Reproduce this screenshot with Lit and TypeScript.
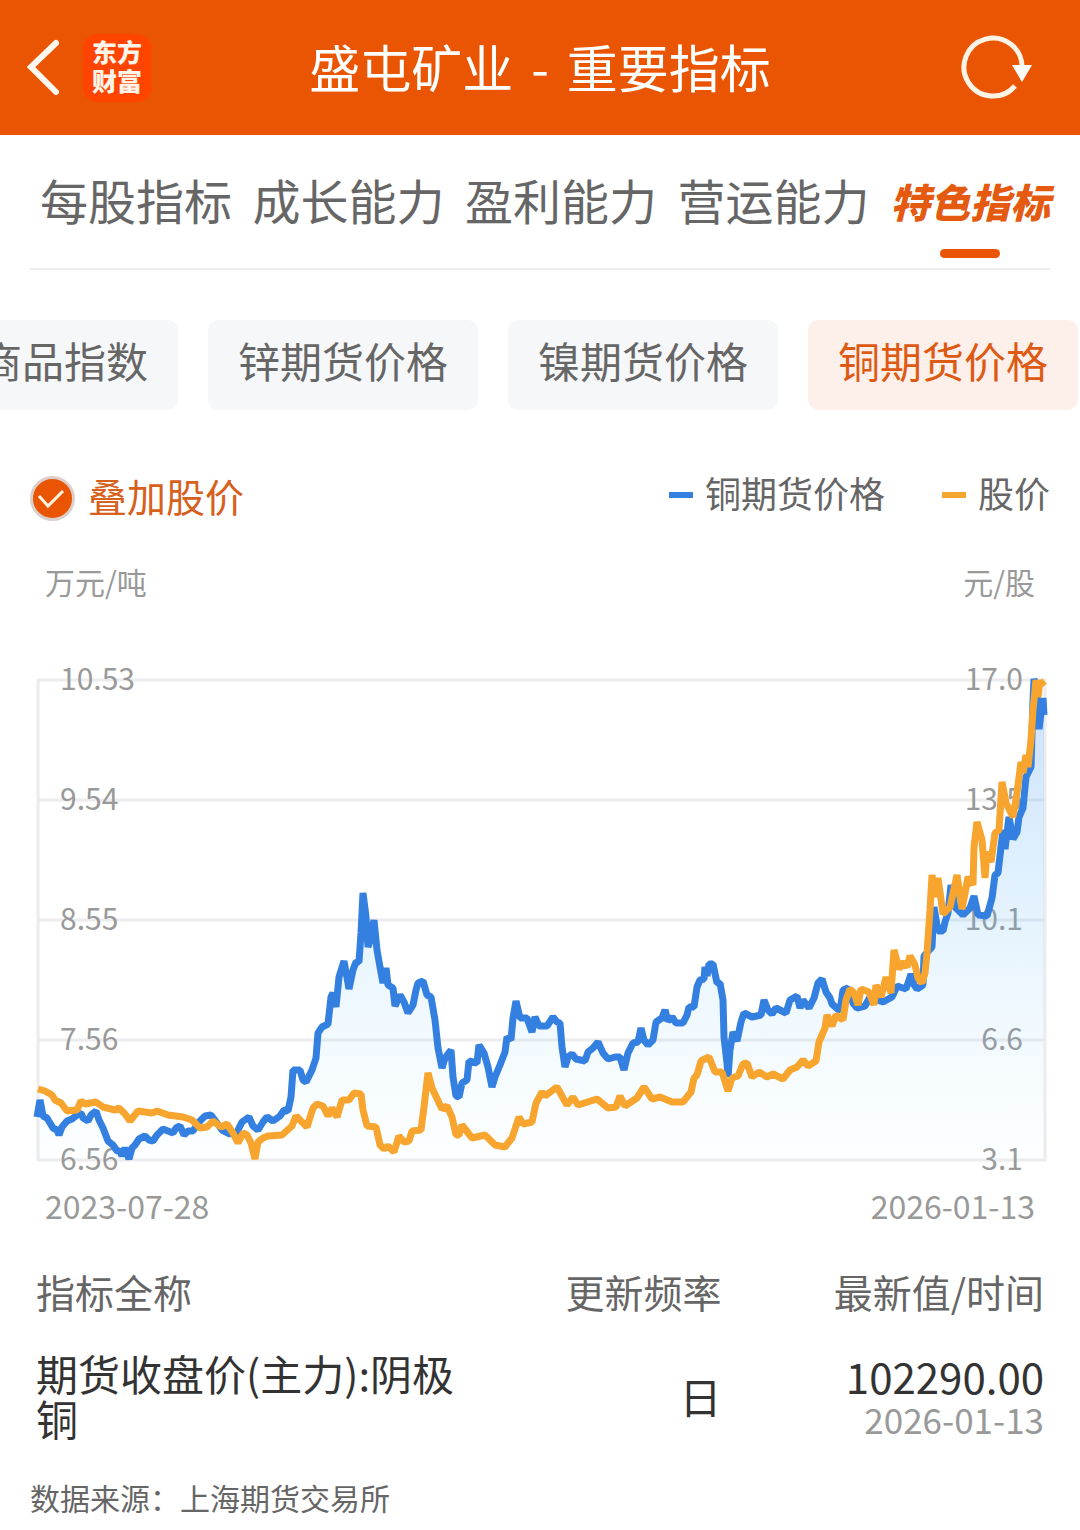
import { LitElement, html, svg, css } from "lit";
import { customElement, state } from "lit/decorators.js";
import { classMap } from "lit/directives/class-map.js";

const BLUE_POINTS =
  "37,1117 40,1100 43,1116 47,1118 50,1123 53,1128 57,1130 59,1135 62,1127 67,1121 72,1119 77,1115 81,1113 83,1118 88,1121 91,1115 96,1111 99,1120 103,1128 108,1141 113,1145 117,1151 120,1151 122,1156 125,1148 129,1159 132,1148 135,1145 139,1139 145,1136 149,1140 153,1141 157,1135 163,1129 168,1131 173,1133 176,1128 180,1126 184,1135 188,1131 193,1131 198,1123 205,1116 211,1115 217,1123 222,1130 230,1134 237,1132 242,1122 249,1117 253,1126 258,1130 263,1122 267,1117 273,1121 280,1116 284,1110 288,1111 291,1097 293,1070 300,1070 303,1080 306,1082 312,1070 316,1058 318,1033 322,1027 328,1024 331,997 333,993 336,1007 339,977 344,961 349,989 353,970 356,962 359,962 361,933 363,893 366,917 368,947 371,937 374,920 377,950 380,967 383,983 386,968 388,985 393,988 395,1006 400,995 404,1002 408,1013 413,1005 416,990 418,983 423,981 427,995 431,997 435,1020 438,1048 442,1068 445,1058 451,1050 453,1077 456,1096 459,1097 462,1083 467,1080 469,1061 477,1063 479,1045 484,1053 488,1067 492,1087 495,1077 500,1065 505,1052 507,1037 511,1040 513,1018 516,1001 520,1018 527,1018 532,1032 535,1017 539,1026 547,1026 553,1017 557,1022 560,1023 562,1047 565,1067 568,1057 572,1054 576,1059 585,1061 588,1052 593,1048 598,1042 603,1053 608,1059 615,1057 620,1057 624,1070 628,1053 633,1043 638,1042 641,1028 644,1040 648,1045 653,1040 656,1022 662,1018 665,1010 668,1021 672,1017 676,1023 683,1023 687,1015 689,1007 694,1007 697,987 700,980 704,979 705,967 707,976 709,964 713,964 717,983 720,983 723,1000 724,1037 727,1063 728,1077 730,1050 733,1032 737,1041 741,1022 744,1013 752,1017 761,1015 764,1000 768,1010 772,1014 776,1008 786,1013 790,1000 797,996 800,1008 803,1000 809,1008 814,998 818,983 822,979 826,992 830,998 832,1004 840,1011 843,990 848,988 853,1003 857,1008 865,1006 870,997 883,1002 892,997 897,986 906,989 911,974 914,985 917,989 923,985 924,956 932,947 934,907 938,931 943,931 945,922 948,913 951,885 955,907 963,915 970,908 974,896 978,915 987,916 992,898 995,875 998,873 1001,847 1003,830 1005,849 1009,817 1013,839 1017,832 1019,817 1023,808 1026,777 1031,767 1033,700 1034,679 1037,690 1039,729 1043,698 1044,715";

const ORANGE_POINTS =
  "38,1089 45,1091 52,1095 55,1100 61,1103 67,1111 77,1110 81,1101 85,1104 96,1102 103,1107 115,1110 119,1108 125,1114 130,1121 138,1111 152,1113 157,1111 168,1115 183,1117 192,1120 200,1128 207,1127 213,1121 221,1127 227,1124 233,1133 238,1143 243,1133 247,1135 251,1143 255,1159 258,1142 263,1138 268,1136 282,1135 292,1126 296,1116 307,1127 313,1108 317,1104 323,1106 328,1116 332,1108 337,1117 342,1100 349,1100 354,1093 361,1094 363,1110 367,1126 376,1127 380,1145 384,1149 388,1146 394,1152 399,1136 404,1142 409,1141 412,1131 421,1130 424,1107 428,1073 432,1088 442,1109 447,1106 452,1117 456,1135 459,1135 462,1125 472,1138 485,1135 495,1145 505,1147 512,1138 519,1117 523,1124 532,1122 536,1103 542,1092 545,1096 557,1087 563,1098 567,1105 573,1097 578,1105 597,1099 608,1108 616,1107 620,1096 625,1106 637,1098 644,1087 652,1099 660,1097 672,1102 683,1102 691,1092 694,1078 697,1075 701,1061 709,1057 715,1072 722,1072 728,1091 732,1078 738,1076 743,1064 747,1063 752,1077 759,1072 767,1077 773,1074 783,1079 790,1070 797,1067 803,1060 808,1066 816,1061 819,1042 825,1028 827,1015 832,1026 836,1015 843,1020 846,1000 850,989 854,993 858,1005 861,989 869,992 874,1005 876,985 881,997 886,977 891,993 894,950 899,969 903,962 907,967 910,956 915,965 918,978 922,983 925,973 927,953 930,910 932,875 935,897 938,878 943,914 950,907 957,875 962,909 968,877 973,885 974,847 977,822 982,840 985,878 987,852 991,862 995,833 999,830 1002,782 1006,803 1013,817 1017,793 1021,762 1023,773 1026,755 1028,767 1031,740 1033,710 1036,680 1038,697 1040,681 1044,686";

const GRID_ROWS = [
  { y: 680, left: "10.53", right: "17.0" },
  { y: 800, left: "9.54", right: "13.5" },
  { y: 920, left: "8.55", right: "10.1" },
  { y: 1040, left: "7.56", right: "6.6" },
  { y: 1160, left: "6.56", right: "3.1" },
];

const TABS = ["每股指标", "成长能力", "盈利能力", "营运能力", "特色指标"];
const CHIPS = ["商品指数", "锌期货价格", "镍期货价格", "铜期货价格"];

@customElement("price-chart")
class PriceChart extends LitElement {
  static properties = { overlay: { type: Boolean } };
  declare overlay: boolean;

  static styles = css`
    :host {
      display: block;
    }
    .plot {
      display: block;
      width: 100%;
      height: auto;
    }
    .grid {
      stroke: #ececee;
      stroke-width: 3;
      fill: none;
    }
    .axis {
      fill: #999999;
      font-family: "Noto Sans CJK SC", sans-serif;
      font-size: 30px;
    }
    .end {
      text-anchor: end;
    }
    .line {
      fill: none;
      stroke-width: 7;
      stroke-linejoin: bevel;
    }
    .metal {
      stroke: #3480e0;
    }
    .stock {
      stroke: #f7a52e;
    }
  `;

  render() {
    return html`
      <svg class="plot" viewBox="0 660 1080 516" role="img" aria-label="铜期货价格">
        <defs>
          <linearGradient id="area" x1="0" y1="680" x2="0" y2="1160" gradientUnits="userSpaceOnUse">
            <stop offset="0" stop-color="#3c8cf0" stop-opacity="0.27" />
            <stop offset="0.5" stop-color="#5ab4f5" stop-opacity="0.16" />
            <stop offset="1" stop-color="#8cdcff" stop-opacity="0.02" />
          </linearGradient>
        </defs>
        ${GRID_ROWS.map((r) => svg`<line class="grid" x1="37" x2="1046" y1=${r.y} y2=${r.y} />`)}
        <path class="grid" d="M38 679V1161M1045 679V1161" />
        ${GRID_ROWS.map(
          (r) => svg`
            <text class="axis" x="60" y=${r.y + 10}>${r.left}</text>
            <text class="axis end" x="1023" y=${r.y + 10}>${r.right}</text>`
        )}
        <polygon fill="url(#area)" points="37,1160 ${BLUE_POINTS} 1044,1160" />
        <polyline class="line metal" points=${BLUE_POINTS} />
        ${this.overlay ? svg`<polyline class="line stock" points=${ORANGE_POINTS} />` : null}
      </svg>
    `;
  }
}

@customElement("app-root")
class AppRoot extends LitElement {
  @state() private tab = 4;
  @state() private chip = 3;
  @state() private overlay = true;

  static styles = css`
    :host {
      display: block;
      min-height: 100vh;
      overflow: hidden;
      background: #ffffff;
      color: #666666;
      font-family: "Noto Sans CJK SC", sans-serif;
    }
    * {
      box-sizing: border-box;
    }
    button {
      margin: 0;
      padding: 0;
      border: 0;
      background: none;
      color: inherit;
      font: inherit;
      cursor: pointer;
    }
    svg {
      display: block;
    }
    .header {
      display: grid;
      grid-template-columns: 1fr auto 1fr;
      align-items: center;
      height: 135px;
      padding: 0 24px;
      background: #ea5504;
      color: #ffffff;
    }
    .brand {
      display: flex;
      align-items: center;
      gap: 19px;
    }
    .logo {
      display: grid;
      place-content: center;
      width: 68px;
      height: 68px;
      padding-bottom: 4px;
      border-radius: 14px;
      background: #ff4400;
      color: #fff4ea;
      font-size: 25px;
      line-height: 29px;
      font-weight: 900;
      text-align: center;
    }
    .title {
      display: flex;
      gap: 18px;
      margin: 0;
      padding-bottom: 4px;
      font-size: 51px;
      line-height: 68px;
      font-weight: 400;
    }
    .refresh {
      justify-self: end;
      margin-right: 20px;
    }
    .tabs {
      display: flex;
      align-items: center;
      justify-content: space-between;
      height: 135px;
      margin: 0 30px;
      padding-left: 10px;
      border-bottom: 2px solid #eeeeee;
    }
    .tab {
      position: relative;
      height: 132px;
      padding-bottom: 6px;
      font-size: 48px;
      line-height: 126px;
      white-space: nowrap;
    }
    .tab.active {
      padding-bottom: 2px;
      color: #e45a10;
      font-size: 40px;
      line-height: 130px;
      font-style: italic;
      font-weight: 900;
    }
    .tab.active::after {
      content: "";
      position: absolute;
      left: 50%;
      bottom: 10px;
      width: 60px;
      height: 9px;
      margin-left: -30px;
      border-radius: 5px;
      background: #ea5504;
    }
    .chips {
      display: flex;
      justify-content: flex-end;
      gap: 30px;
      padding: 50px 2px 0 0;
    }
    .chip {
      flex: none;
      height: 90px;
      padding: 0 30px 10px;
      border-radius: 10px;
      background: #f6f7f9;
      font-size: 42px;
      line-height: 80px;
    }
    .chip.active {
      background: #fdf0ea;
      color: #dd5a14;
    }
    .legend {
      display: flex;
      align-items: center;
      justify-content: space-between;
      padding: 56px 30px 0;
    }
    .overlay {
      display: flex;
      align-items: center;
      gap: 13px;
      color: #d6601c;
      font-size: 39px;
      line-height: 56px;
      cursor: pointer;
    }
    .check {
      display: grid;
      margin-top: 6px;
    }
    .check > * {
      grid-area: 1 / 1;
    }
    .box {
      appearance: none;
      width: 45px;
      height: 45px;
      margin: 0;
      border: 3px solid #dccfc9;
      border-radius: 50%;
      background: #ffffff;
    }
    .box:checked {
      background: #ea5504;
    }
    .tick {
      pointer-events: none;
    }
    .series {
      display: flex;
      gap: 57px;
      padding-bottom: 6px;
      font-size: 36px;
      line-height: 52px;
    }
    .key {
      display: flex;
      align-items: center;
      gap: 12px;
    }
    .key::before {
      content: "";
      width: 24px;
      height: 6px;
      margin-top: 6px;
      background: #3480e0;
    }
    .key.stock::before {
      background: #f7a52e;
    }
    .units,
    .dates {
      display: flex;
      justify-content: space-between;
      padding: 0 45px;
      color: #999999;
      line-height: 44px;
    }
    .units {
      padding-top: 35px;
      padding-bottom: 57px;
      font-size: 30px;
    }
    .dates {
      padding-top: 7px;
      font-size: 32px;
    }
    .facts {
      width: calc(100% - 72px);
      margin: 36px 36px 0;
      border-collapse: collapse;
      table-layout: fixed;
    }
    .facts th {
      padding: 0;
      font-size: 39px;
      line-height: 56px;
      font-weight: 400;
      text-align: right;
    }
    .facts td {
      padding: 31px 0 0;
      color: #333333;
      font-size: 42px;
      line-height: 45px;
      text-align: right;
    }
    .facts .name {
      width: 43%;
      text-align: left;
    }
    .facts .rate {
      width: 25%;
    }
    .facts .value {
      padding-top: 34px;
    }
    .day {
      display: block;
      color: #999999;
      font-size: 35px;
      line-height: 42px;
    }
    .source {
      margin: 35px 30px 0;
      font-size: 30px;
      line-height: 44px;
    }
  `;

  render() {
    return html`
      <header class="header">
        <div class="brand">
          <button aria-label="返回">
            <svg width="40" height="60" viewBox="0 0 40 60" fill="none" stroke="#fff8f0" stroke-width="6" stroke-linecap="round" stroke-linejoin="miter">
              <path d="M32 5L7 29L32 54" />
            </svg>
          </button>
          <div class="logo"><span>东方</span><span>财富</span></div>
        </div>
        <h1 class="title"><span>盛屯矿业</span><span>-</span><span>重要指标</span></h1>
        <button class="refresh" aria-label="刷新">
          <svg width="76" height="68" viewBox="0 0 76 68">
            <path d="M62 34A29 29 0 1 0 55 52" fill="none" stroke="#fff3e6" stroke-width="5" />
            <path d="M52 31H72L62 48Z" fill="#ffffff" />
          </svg>
        </button>
      </header>

      <nav class="tabs">
        ${TABS.map(
          (t, i) => html`<button class=${classMap({ tab: true, active: i === this.tab })} @click=${() => (this.tab = i)}>${t}</button>`
        )}
      </nav>

      <div class="chips">
        ${CHIPS.map(
          (c, i) => html`<button class=${classMap({ chip: true, active: i === this.chip })} @click=${() => (this.chip = i)}>${c}</button>`
        )}
      </div>

      <div class="legend">
        <label class="overlay">
          <span class="check">
            <input class="box" type="checkbox" .checked=${this.overlay} @change=${() => (this.overlay = !this.overlay)} />
            <svg class="tick" width="45" height="45" viewBox="0 0 45 45" fill="none" stroke="#fff3e0" stroke-width="3">
              <path d="M9 20L18 30L33 15" />
            </svg>
          </span>
          <span>叠加股价</span>
        </label>
        <div class="series">
          <span class="key">铜期货价格</span>
          <span class="key stock">股价</span>
        </div>
      </div>

      <div class="units"><span>万元/吨</span><span>元/股</span></div>
      <price-chart .overlay=${this.overlay}></price-chart>
      <div class="dates"><span>2023-07-28</span><span>2026-01-13</span></div>

      <table class="facts">
        <thead>
          <tr>
            <th class="name">指标全称</th>
            <th class="rate">更新频率</th>
            <th>最新值/时间</th>
          </tr>
        </thead>
        <tbody>
          <tr>
            <td class="name">期货收盘价(主力):阴极铜</td>
            <td>日</td>
            <td class="value">102290.00<span class="day">2026-01-13</span></td>
          </tr>
        </tbody>
      </table>

      <p class="source">数据来源：上海期货交易所</p>
    `;
  }
}
